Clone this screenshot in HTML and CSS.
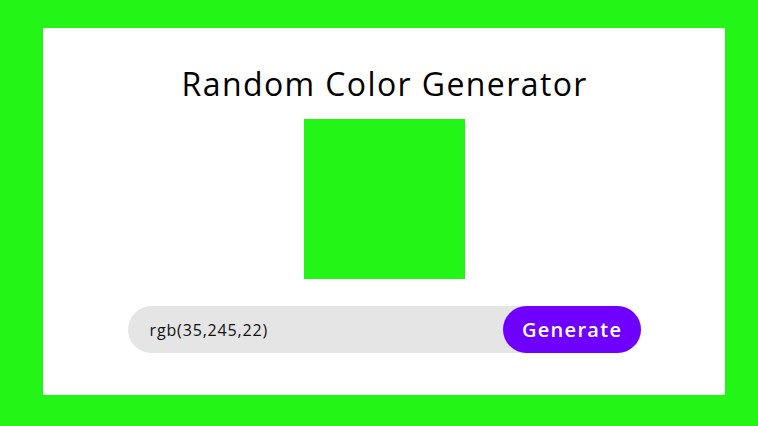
FILE: index.html
```html
<!DOCTYPE html>
<html>
<head>
<meta charset="utf-8">
<link rel="stylesheet" href="styles.css">
</head>
<body>
<div class="card">
  <h1 class="title">Random Color Generator</h1>
  <div class="swatch"></div>
  <div class="bar">
    <span class="value">rgb(35,245,22)</span>
    <button class="btn">Generate</button>
  </div>
</div>
</body>
</html>
```
FILE: styles.css
```css
html, body {
  margin: 0;
  height: 100%;
}
body {
  background: #23f516;
  box-sizing: border-box;
  padding: 28px 0 0 43px;
  font-family: "Open Sans", "Noto Sans", sans-serif;
}
.card {
  width: 682px;
  height: 367px;
  background: #ffffff;
  box-sizing: border-box;
  padding-top: 32px;
  display: flex;
  flex-direction: column;
  align-items: center;
}
.title {
  margin: 0;
  font-size: 32px;
  line-height: 48px;
  font-weight: 400;
  letter-spacing: 1.4px;
  padding-left: 1.4px;
  color: #000;
}
.swatch {
  width: 161px;
  height: 160px;
  margin-top: 11px;
  background: #23f516;
}
.bar {
  margin-top: 27px;
  width: 513px;
  height: 47px;
  border-radius: 24px;
  background: #e5e5e5;
  display: flex;
  align-items: center;
  justify-content: space-between;
  padding-left: 22px;
  box-sizing: border-box;
}
.value {
  font-size: 16px;
  letter-spacing: 0.85px;
  color: #111;
}
.btn {
  width: 138px;
  height: 47px;
  border: none;
  border-radius: 24px;
  background: #6f00ff;
  color: #fff;
  font-family: inherit;
  font-size: 20px;
  font-weight: 600;
  letter-spacing: 1.3px;
  padding: 0 0 0 1.3px;
}
```
